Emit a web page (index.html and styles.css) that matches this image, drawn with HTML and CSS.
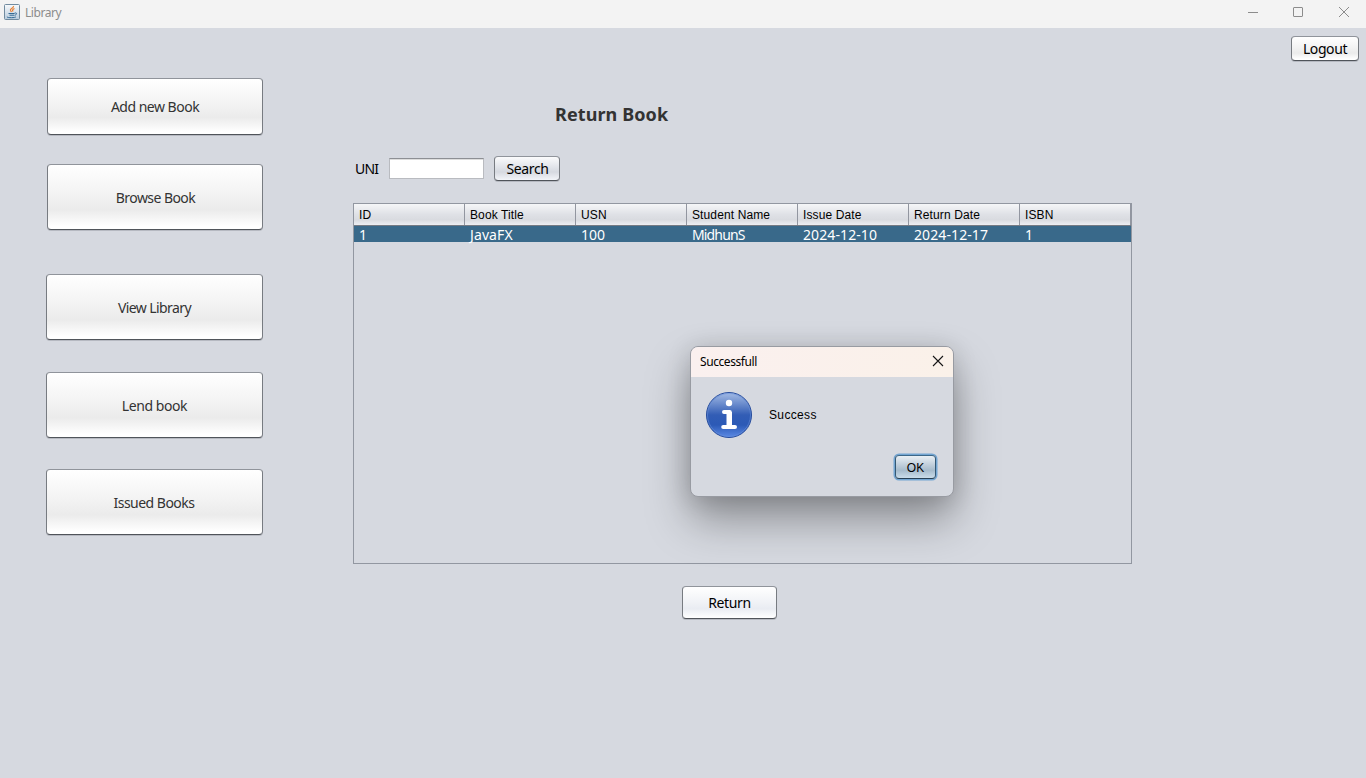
FILE: index.html
```html
<!DOCTYPE html>
<html lang="en">
<head>
<meta charset="utf-8">
<title>Library</title>
<link rel="stylesheet" href="styles.css">
</head>
<body>
<header class="titlebar">
  <svg class="app-icon" width="16" height="16" viewBox="0 0 16 16">
    <defs><linearGradient id="tile" x1="0" y1="0" x2="0" y2="1"><stop offset="0" stop-color="#f8fafc"/><stop offset="1" stop-color="#b8ccdd"/></linearGradient></defs>
    <rect x=".5" y=".5" width="15" height="15" rx="1" fill="url(#tile)" stroke="#718b9f"/>
    <path d="M9.500 2C10 4 5.500 4.500 6.500 6.500L7.500 8M10.500 4.500C8.300 5.500 8.300 6.500 9 7.500" fill="none" stroke="#ea8033" stroke-width="1.300"/>
    <path d="M4.500 9.500H10.500M5.500 11.200H10M10.500 9.200C13.500 8 13 11 10.500 11.300M3 12.700C2.500 14 11.500 14 12 12.700" fill="none" stroke="#346a94" stroke-width="1"/>
  </svg>
  <span class="app-name">Library</span>
  <svg class="controls" width="110" height="16" viewBox="0 0 110 16" fill="none" stroke="#8c8c8c">
    <path d="M4 8.500H14"/>
    <rect x="49.500" y="3.500" width="9" height="9" rx=".5"/>
    <path d="M95 3L105 13M105 3L95 13"/>
  </svg>
</header>
<div class="workspace">
  <nav class="sidebar">
    <button class="btn nav-btn add">Add new Book</button>
    <button class="btn nav-btn browse">Browse Book</button>
    <button class="btn nav-btn view">View Library</button>
    <button class="btn nav-btn lend">Lend book</button>
    <button class="btn nav-btn issued">Issued Books</button>
  </nav>
  <main class="content">
    <h1 class="heading">Return Book</h1>
    <div class="search-row">
      <label class="uni" for="uni">UNI</label>
      <input class="field" id="uni" type="text">
      <button class="btn search">Search</button>
    </div>
    <section class="table">
      <div class="row head">
        <span>ID</span><span>Book Title</span><span>USN</span><span>Student Name</span><span>Issue Date</span><span>Return Date</span><span>ISBN</span>
      </div>
      <div class="row selected">
        <span>1</span><span class="book">JavaFX</span><span>100</span><span class="name">MidhunS</span><span class="date">2024-12-10</span><span class="date">2024-12-17</span><span>1</span>
      </div>
    </section>
    <button class="btn return">Return</button>
  </main>
  <aside class="account"><button class="btn logout">Logout</button></aside>
</div>
<section class="dialog" role="dialog">
  <header class="dialog-bar">
    <span class="dialog-title">Successfull</span>
    <svg width="12" height="12" viewBox="0 0 12 12"><path d="M1 1L11 11M11 1L1 11" fill="none" stroke="#161616" stroke-width="1.100"/></svg>
  </header>
  <div class="message">
    <svg width="46" height="46" viewBox="0 0 46 46">
      <defs><linearGradient id="info" x1="0" y1="0" x2="0" y2="1"><stop offset="0" stop-color="#a5bce5"/><stop offset=".5" stop-color="#325db5"/><stop offset=".72" stop-color="#2c5ab6"/><stop offset="1" stop-color="#5c8ae5"/></linearGradient></defs>
      <circle cx="23" cy="23" r="22.500" fill="url(#info)" stroke="#254b9c"/>
      <circle cx="23" cy="23" r="21.500" fill="none" stroke="#6c91da" stroke-opacity=".55"/>
      <circle cx="23" cy="11" r="3.200" fill="#fff"/>
      <path d="M18 20H23.800V35M17.200 35H29" fill="none" stroke="#fff" stroke-width="4" stroke-linecap="round" stroke-linejoin="round"/>
      <path d="M20.500 20H26V35H20.500Z" fill="#fff"/>
    </svg>
    <span class="success">Success</span>
  </div>
  <button class="btn ok">OK</button>
</section>
</body>
</html>
```
FILE: styles.css
```css
* { box-sizing: border-box; }
body {
  margin: 0;
  width: 1366px;
  height: 778px;
  display: flex;
  flex-direction: column;
  overflow: hidden;
  background: #d6d9e0;
  color: #000;
  font: 14px/18px "Noto Sans", sans-serif;
}
.titlebar {
  height: 28px;
  flex: none;
  display: flex;
  align-items: flex-start;
  padding: 4px 12px 0 4px;
  background: #f3f3f3;
}
.app-name { margin-left: 5px; color: #8c8c8c; font-size: 12px; letter-spacing: -.45px; }
.controls { margin-left: auto; }
.workspace { flex: 1; display: flex; }
.sidebar {
  width: 263px;
  padding: 50px 0 0 46px;
  display: flex;
  flex-direction: column;
  align-items: flex-end;
}
.btn {
  display: block;
  padding: 0;
  border: 1px solid #7b7f86;
  border-color: #90949b #777b81 #50545a;
  border-radius: 4px;
  background: linear-gradient(#fff, #f3f3f3 45%, #ebebeb 70%, #fff 96%);
  box-shadow: 0 1px 0 rgba(100, 105, 115, .28);
  color: #000;
  font: 14px/18px "Noto Sans", sans-serif;
  white-space: nowrap;
}
.nav-btn { width: 217px; height: 66px; padding-top: 2px; color: #333; letter-spacing: -.58px; }
.add { width: 216px; height: 57px; padding-top: 0; margin-bottom: 29px; letter-spacing: -.5px; }
.browse { width: 216px; margin-bottom: 44px; letter-spacing: -.57px; padding-left: 1px; }
.view { margin-bottom: 32px; }
.lend { margin-bottom: 31px; letter-spacing: -.42px; }
.issued { padding-right: 1px; letter-spacing: -.52px; }
.content { margin-left: 90px; width: 779px; padding-top: 74px; }
.heading {
  margin: 0 0 28px 202px;
  color: #333;
  font-size: 18px;
  line-height: 25px;
  letter-spacing: .1px;
}
.search-row { display: flex; height: 26px; align-items: center; }
.uni { width: 36px; padding: 2px 0 0 2px; letter-spacing: -.8px; }
.field {
  width: 95px;
  height: 21px;
  padding: 2px 5px;
  border: 1px solid #b9bbc0;
  border-top-color: #8d8f94;
  background: #fff;
  box-shadow: inset 0 1px 0 #ddd;
  font: inherit;
}
.search {
  width: 66px;
  height: 25px;
  margin-left: 10px;
  padding: 1px 0 0 1px;
  background: linear-gradient(#fbfbfc, #e0e3e9 45%, #d6d9e0 65%, #f3f5f9);
  letter-spacing: -.35px;
}
.table {
  width: 779px;
  height: 361px;
  margin-top: 22px;
  border: 1px solid #9297a1;
}
.row { display: grid; grid-template-columns: repeat(7, 111px); }
.row span { padding-left: 5px; }
.head {
  height: 22px;
  border-bottom: 1px solid #767b84;
  background: linear-gradient(#f5f6f8, #dfe1e6 50%, #d9dbe0 75%, #edeff3);
  font: 12px/22px "Liberation Sans", Arial, sans-serif;
  letter-spacing: .12px;
}
.head span { height: 21px; border-right: 1px solid #9296a0; }
.selected { height: 16px; background: #39698a; color: #fff; line-height: 18px; }
.name { letter-spacing: -.9px; }
.row .name { letter-spacing: -.85px; }
.book { letter-spacing: .1px; }
.date { letter-spacing: .1px; }
.return {
  width: 95px;
  height: 33px;
  margin: 22px 0 0 329px;
  background: linear-gradient(#fff, #f0f2f6 50%, #e9ecf2 70%, #fff);
  letter-spacing: -.38px;
}
.account { margin-left: auto; padding: 8px 7px 0 0; }
.logout { width: 68px; height: 25px; letter-spacing: -.4px; }
.dialog {
  position: absolute;
  left: 690px;
  top: 346px;
  width: 264px;
  height: 151px;
  border: 1px solid #989ba2;
  border-radius: 8px;
  overflow: hidden;
  background: #d6d9e0;
  box-shadow: 0 23px 44px rgba(0, 0, 0, .34), 0 2px 24px rgba(0, 0, 0, .14);
}
.dialog-bar {
  height: 30px;
  display: flex;
  align-items: center;
  justify-content: space-between;
  padding: 0 9px;
  background: linear-gradient(90deg, #faf0ef, #faf1e9);
}
.dialog-bar svg { margin-bottom: 2px; }
.dialog-title { font-size: 12px; letter-spacing: -.43px; }
.message { display: flex; align-items: center; gap: 17px; padding: 15px 0 0 15px; }
.success { font: 12px/16px "Liberation Sans", Arial, sans-serif; letter-spacing: .35px; }
.ok {
  width: 41px;
  height: 24px;
  margin: 17px 0 0 204px;
  padding-top: 2px;
  border-color: #3c6788 #345874 #263f54;
  background: linear-gradient(#e9eff4, #b8c8d6 48%, #a6bbcc 65%, #c9dce9);
  box-shadow: 0 0 0 1.500px #72a5d2;
  font: 12px/16px "Liberation Sans", Arial, sans-serif;
}
```
